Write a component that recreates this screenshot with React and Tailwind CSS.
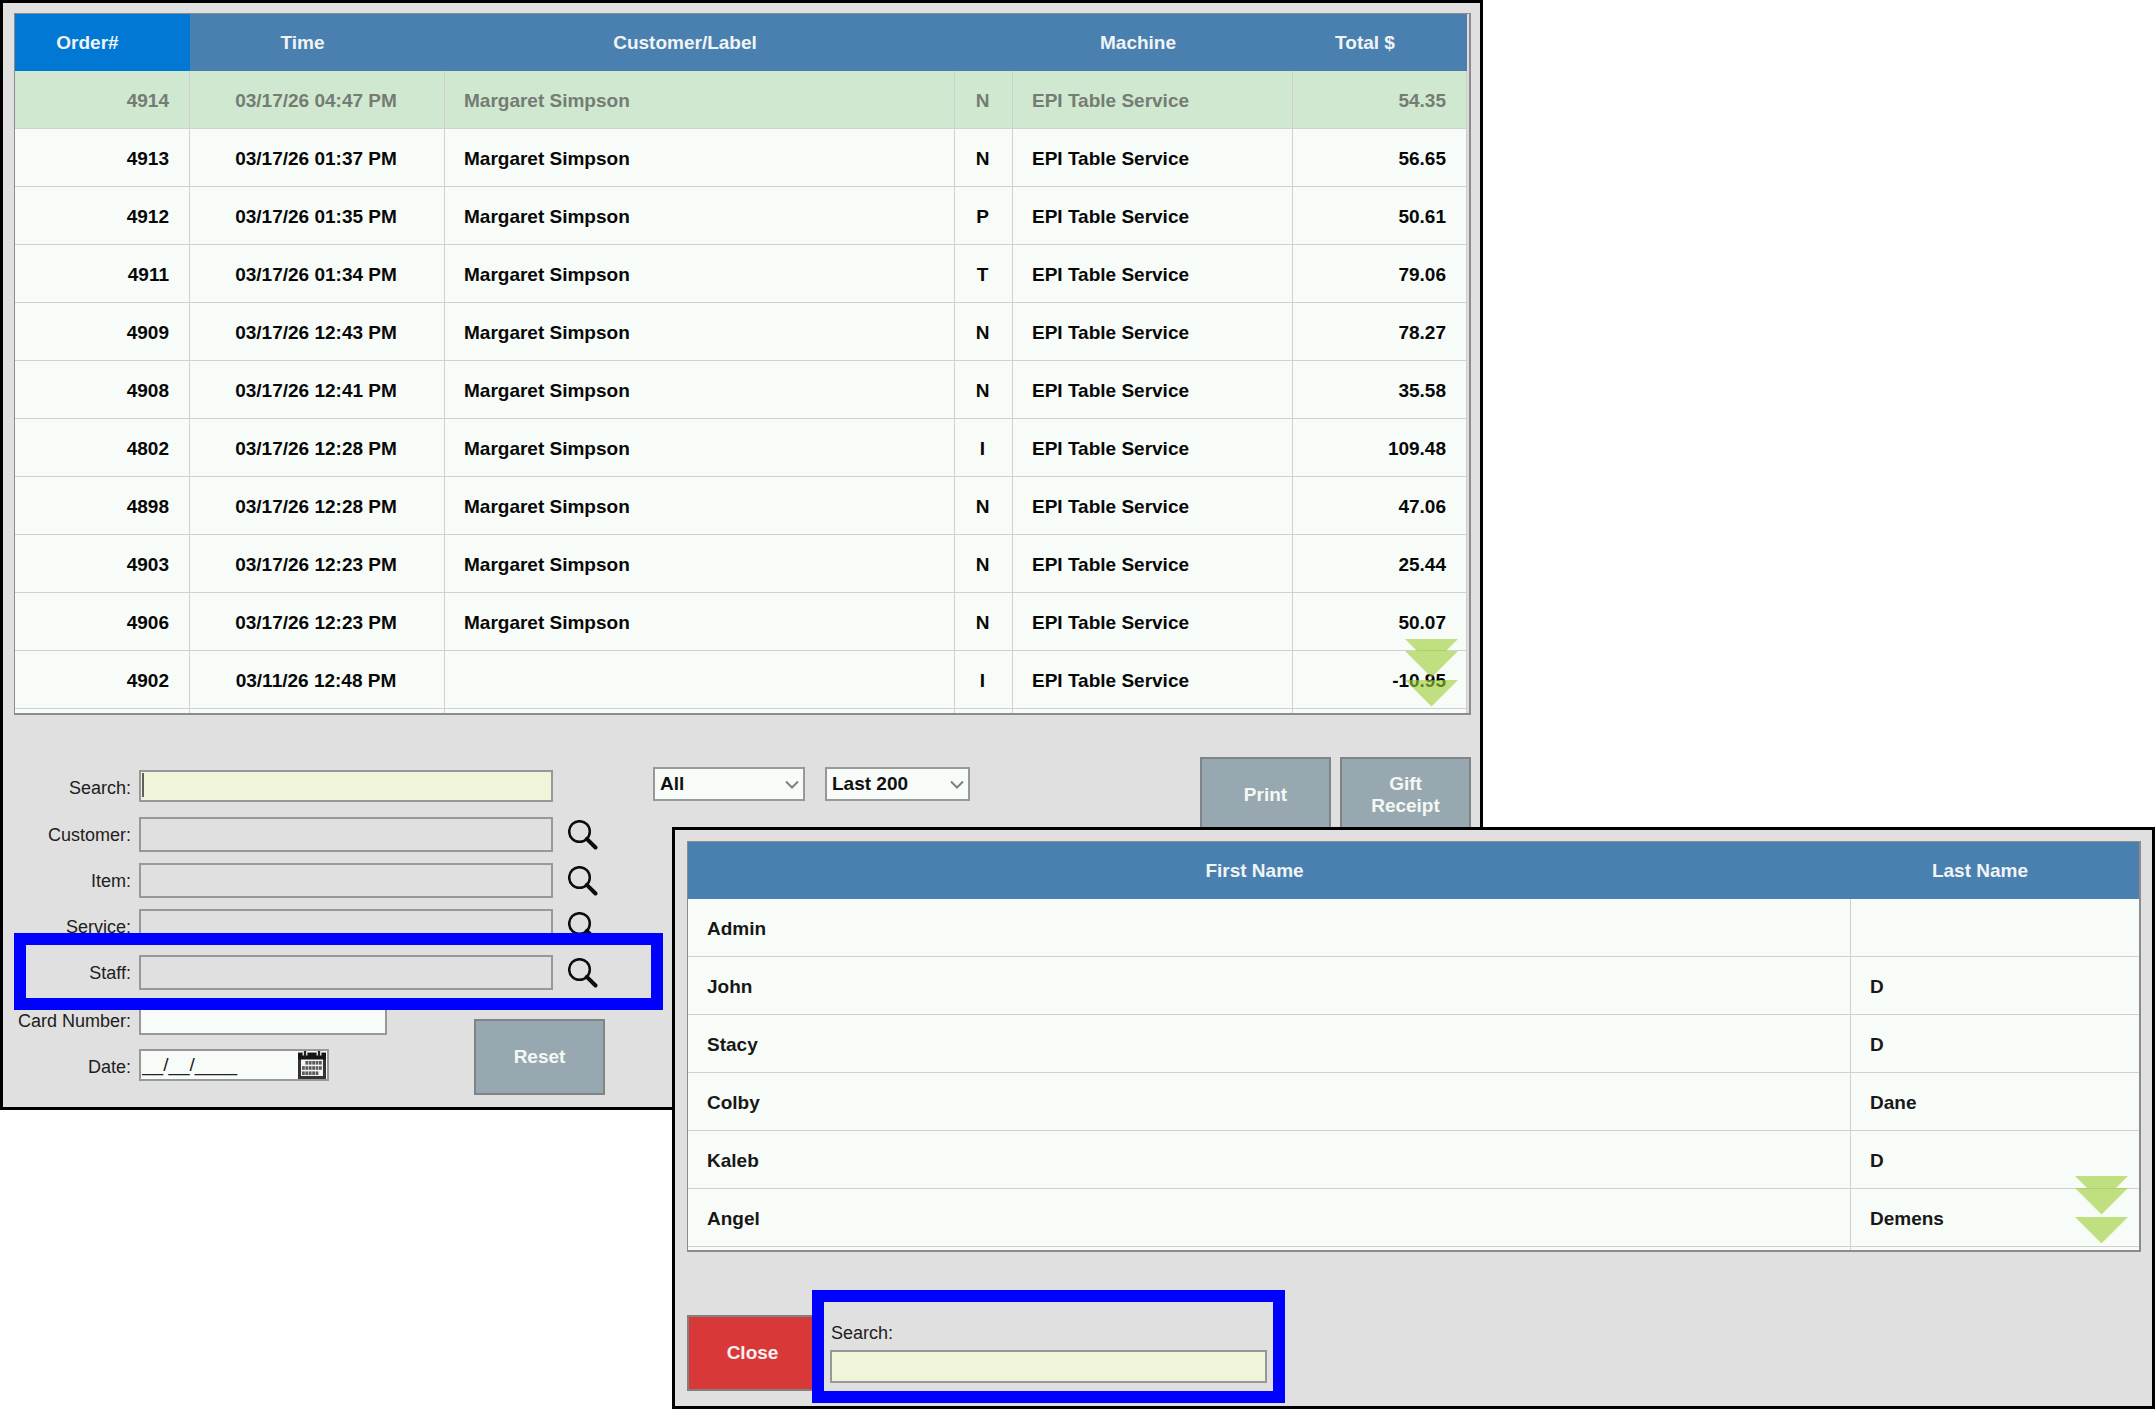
import React from "react";

const orders = [
  ["4914", "03/17/26 04:47 PM", "Margaret Simpson", "N", "54.35"],
  ["4913", "03/17/26 01:37 PM", "Margaret Simpson", "N", "56.65"],
  ["4912", "03/17/26 01:35 PM", "Margaret Simpson", "P", "50.61"],
  ["4911", "03/17/26 01:34 PM", "Margaret Simpson", "T", "79.06"],
  ["4909", "03/17/26 12:43 PM", "Margaret Simpson", "N", "78.27"],
  ["4908", "03/17/26 12:41 PM", "Margaret Simpson", "N", "35.58"],
  ["4802", "03/17/26 12:28 PM", "Margaret Simpson", "I", "109.48"],
  ["4898", "03/17/26 12:28 PM", "Margaret Simpson", "N", "47.06"],
  ["4903", "03/17/26 12:23 PM", "Margaret Simpson", "N", "25.44"],
  ["4906", "03/17/26 12:23 PM", "Margaret Simpson", "N", "50.07"],
  ["4902", "03/11/26 12:48 PM", "", "I", "-10.95"],
];

const staff = [
  ["Admin", ""],
  ["John", "D"],
  ["Stacy", "D"],
  ["Colby", "Dane"],
  ["Kaleb", "D"],
  ["Angel", "Demens"],
];

const cell = "border-b border-r border-[#d0d0d0] p-0 pt-[3px]";
const head = "h-[57px] p-0 pr-[30px] text-center font-bold text-[#f0f4f4]";
const frame =
  "relative border-t border-l border-r-2 border-b-2 border-[#8c8c8c] text-[19px] leading-6 font-bold";
const field = "border-2 border-[#989898] outline-none";
const button =
  "h-[76px] w-[131px] border-2 border-[#808486] bg-[#98a8b0] text-[19px] leading-[22px] font-bold text-[#f4f8f4]";

function ScrollArrows() {
  return (
    <button type="button" aria-label="Scroll down" className="absolute right-[11px] bottom-[6px]">
      <svg width="53" height="68" viewBox="0 0 53 68" className="block">
        <g fill="#9acd32" opacity="0.6">
          <path d="M0 0H53L26.500 26.500Z" />
          <path d="M0 12H53L26.500 38.500Z" />
          <path d="M0 41H53L26.500 67.500Z" />
        </g>
      </svg>
    </button>
  );
}

function Magnifier() {
  return (
    <svg width="30" height="30" viewBox="0 0 30 30" fill="none" stroke="#0c0c0c" className="block">
      <circle cx="11.500" cy="11.500" r="10.300" strokeWidth="2.500" />
      <path d="M18.800 18.800L27.500 27.500" strokeWidth="4" strokeLinecap="round" />
    </svg>
  );
}

function Calendar() {
  const dots = [];
  for (let r = 0; r < 3; r++) {
    for (let c = 0; c < 6; c++) {
      if ((r === 0 && c === 0) || (r === 2 && c === 5)) continue;
      dots.push(<rect key={r + "-" + c} x={4 + c * 3.4} y={10 + r * 5.2} width="2.800" height="3.600" />);
    }
  }
  return (
    <svg width="28" height="28" viewBox="0 0 28 28" className="block">
      <path d="M1.500 3H26.500V26.500H1.500Z" fill="#f4f4f4" stroke="#333" strokeWidth="3" />
      <path d="M0 2H28V8.500H0Z" fill="#141414" />
      <path d="M4.500 0H9.500V4.500H4.500ZM18.500 0H23.500V4.500H18.500Z" fill="#d8d8d8" />
      <path d="M7 0V5.500M21 0V5.500" stroke="#222" strokeWidth="2" />
      <g fill="#5c5c5c">{dots}</g>
    </svg>
  );
}

function LookupRow({ id, label, children }) {
  return (
    <div className="relative flex items-center">
      <label htmlFor={id} className="w-[117px] shrink-0 text-right">
        {label}
      </label>
      <input id={id} type="text" className={`${field} ml-2 h-[35px] w-[414px] bg-[#e0e0e0]`} />
      <button type="button" aria-label={`Find ${label}`} className="ml-[15px]">
        <Magnifier />
      </button>
      {children}
    </div>
  );
}

function Dropdown({ label, value, className }) {
  return (
    <div className={`relative ${className}`}>
      <select
        aria-label={label}
        className={`${field} h-[34px] w-full appearance-none bg-[#f8fcf8] pl-[5px] text-[19px] leading-6 font-bold text-[#101010]`}
      >
        <option>{value}</option>
      </select>
      <svg
        width="14"
        height="9"
        viewBox="0 0 14 9"
        fill="none"
        stroke="#808080"
        strokeWidth="2"
        className="pointer-events-none absolute top-[13px] right-[6px]"
      >
        <path d="M1 1.500L7 7.500L13 1.500" />
      </svg>
    </div>
  );
}

function OrdersWindow() {
  return (
    <section className="mr-[673px] border-[3px] border-black bg-[#e0e0e0] pt-[10px] pr-[9px] pb-3 pl-[11px]">
      <div className={`${frame} bg-[#dcdcdc] pr-[2px]`}>
        <table className="w-full table-fixed border-separate border-spacing-0">
          <colgroup>
            <col className="w-[175px]" />
            <col className="w-[255px]" />
            <col />
            <col className="w-[58px]" />
            <col className="w-[280px]" />
            <col className="w-[174px]" />
          </colgroup>
          <thead>
            <tr className="bg-[#4a80b0]">
              <th className={`${head} bg-[#0078d4]`}>Order#</th>
              <th className={head}>Time</th>
              <th className={head}>Customer/Label</th>
              <th className="p-0" aria-label="Type"></th>
              <th className={head}>Machine</th>
              <th className={head}>Total $</th>
            </tr>
          </thead>
          <tbody className="bg-[#f8fcf8]">
            {orders.map(([order, time, customer, type, total], i) => (
              <tr key={order} className={i === 0 ? "h-[58px] bg-[#d0e8d0] text-[#747c74]" : "h-[58px] text-[#080808]"}>
                <td className={`${cell} pr-5 text-right`}>{order}</td>
                <td className={`${cell} pr-[2px] text-center`}>{time}</td>
                <td className={`${cell} pl-[19px]`}>{customer}</td>
                <td className={`${cell} pr-[2px] text-center`}>{type}</td>
                <td className={`${cell} pl-[19px]`}>EPI Table Service</td>
                <td className={`${cell} pr-5 text-right`}>{total}</td>
              </tr>
            ))}
            <tr className="h-1" aria-hidden="true">
              {[0, 1, 2, 3, 4, 5].map((n) => (
                <td key={n} className="h-1 border-r border-[#d0d0d0] p-0"></td>
              ))}
            </tr>
          </tbody>
        </table>
        <ScrollArrows />
      </div>

      <div className="flex items-start">
        <form className="mt-[55px] flex w-[591px] shrink-0 flex-col gap-[11px] text-[18px] leading-6 text-[#202020]">
          <div className="relative mb-1 flex items-center">
            <label htmlFor="search" className="w-[117px] shrink-0 pt-1 text-right">
              Search:
            </label>
            <input id="search" type="text" className={`${field} ml-2 h-8 w-[414px] border-[#90948a] bg-[#f0f4d8]`} />
            <span className="absolute top-[3px] left-[128px] h-6 w-[2px] bg-[#606060]"></span>
          </div>
          <LookupRow id="customer" label="Customer:" />
          <LookupRow id="item" label="Item:" />
          <LookupRow id="service" label="Service:" />
          <LookupRow id="staff" label="Staff:">
            <div className="pointer-events-none absolute -top-[22px] -right-[58px] -bottom-5 left-0 z-10 border-[12px] border-[#0000ff]"></div>
          </LookupRow>
          <div className="mt-[2px] flex items-start">
            <div className="flex flex-col gap-[14px]">
              <div className="flex items-center">
                <label htmlFor="card" className="w-[117px] shrink-0 pt-1 text-right">
                  Card Number:
                </label>
                <input id="card" type="text" className={`${field} ml-2 h-8 w-[248px] bg-[#f8fcf8]`} />
              </div>
              <div className="flex items-center">
                <label htmlFor="date" className="w-[117px] shrink-0 pt-1 text-right">
                  Date:
                </label>
                <div className={`${field} ml-2 flex h-8 w-[190px] items-center bg-[#f8fcf8]`}>
                  <input
                    id="date"
                    type="text"
                    defaultValue="__/__/____"
                    className="w-full min-w-0 pl-px text-[19px] leading-6 outline-none"
                  />
                  <button type="button" aria-label="Open calendar" className="mr-px shrink-0">
                    <Calendar />
                  </button>
                </div>
              </div>
            </div>
            <button type="button" className={`${button} mt-4 ml-auto`}>
              Reset
            </button>
          </div>
        </form>
        <div className="mt-[52px] ml-12 flex gap-5">
          <Dropdown label="Order type" value="All" className="w-[152px]" />
          <Dropdown label="Order count" value="Last 200" className="w-[145px]" />
        </div>
        <div className="mt-[42px] ml-auto flex gap-[9px]">
          <button type="button" className={button}>
            Print
          </button>
          <button type="button" className={button}>
            Gift
            <br />
            Receipt
          </button>
        </div>
      </div>
    </section>
  );
}

function StaffWindow() {
  return (
    <section className="relative z-20 -mt-[283px] mr-px ml-[672px] border-[3px] border-black bg-[#e0e0e0] pt-[11px] pr-[11px] pb-[15px] pl-3">
      <div className={`${frame} bg-[#f8fcf8]`}>
        <table className="w-full table-fixed border-separate border-spacing-0">
          <colgroup>
            <col />
            <col className="w-[288px]" />
          </colgroup>
          <thead>
            <tr className="bg-[#4a80b0]">
              <th className={head}>First Name</th>
              <th className={head}>Last Name</th>
            </tr>
          </thead>
          <tbody className="text-[#181818]">
            {staff.map(([first, last]) => (
              <tr key={first} className="h-[58px]">
                <td className={`${cell} pl-[19px]`}>{first}</td>
                <td className="border-b border-[#d0d0d0] p-0 pt-[3px] pl-[19px]">{last}</td>
              </tr>
            ))}
            <tr className="h-[3px]" aria-hidden="true">
              <td className="h-[3px] border-r border-[#d0d0d0] p-0"></td>
              <td className="h-[3px] p-0"></td>
            </tr>
          </tbody>
        </table>
        <ScrollArrows />
      </div>
      <div className="mt-[63px] flex items-start">
        <button
          type="button"
          className="h-[76px] w-[131px] border-2 border-[#808080] bg-[#d83838] text-[19px] leading-[22px] font-bold text-[#f8f0f0]"
        >
          Close
        </button>
        <div className="relative ml-3 flex flex-col pt-[6px] text-[18px] leading-6 text-[#202020]">
          <label htmlFor="staff-search" className="mb-[5px] pl-px">
            Search:
          </label>
          <input id="staff-search" type="text" className={`${field} h-[33px] w-[437px] border-[#90948a] bg-[#f0f4d8]`} />
          <div className="pointer-events-none absolute -top-[25px] -right-[18px] -bottom-5 -left-[18px] border-[12px] border-[#0000ff]"></div>
        </div>
      </div>
    </section>
  );
}

export default function App() {
  return (
    <main className="flow-root min-h-screen bg-white font-['Liberation_Sans',Arial,sans-serif]">
      <OrdersWindow />
      <StaffWindow />
    </main>
  );
}
